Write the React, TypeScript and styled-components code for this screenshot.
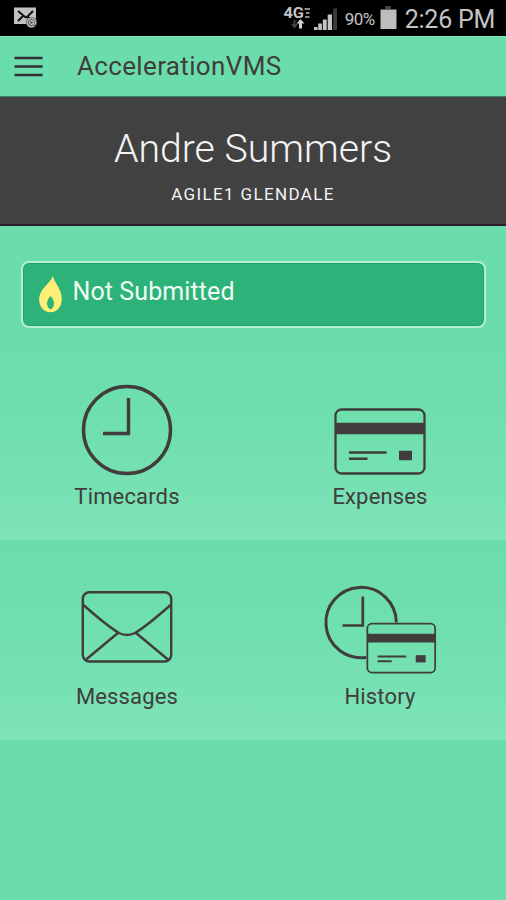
import React from 'react';
import styled, { createGlobalStyle } from 'styled-components';

const ink = '#403d3c';

const GlobalStyle = createGlobalStyle`
  * { box-sizing: border-box; }
  body { margin: 0; background: #6bdcab; font-family: Roboto, "Liberation Sans", sans-serif; }
  svg { display: block; flex: none; }
`;

const Screen = styled.div`
  width: 506px;
  height: 900px;
  display: flex;
  flex-direction: column;
  overflow: hidden;
  background: #6bdcab;
`;

const StatusBar = styled.header`
  height: 36px;
  padding: 0 11px 0 14px;
  display: flex;
  align-items: flex-start;
  background: #000;
  color: #c4c4c4;
  white-space: nowrap;
`;

const Spacer = styled.div`
  flex: 1;
`;

const BatteryLevel = styled.span`
  width: 33px;
  margin: 9px 2px 0 7px;
  font-size: 17px;
  line-height: 20px;
  letter-spacing: -0.5px;
`;

const Clock = styled.time`
  margin: 4px 0 0 8px;
  font-size: 25px;
  line-height: 31px;
  letter-spacing: -0.25px;
`;

const AppBar = styled.nav`
  height: 61px;
  padding: 0 14px;
  display: flex;
  align-items: center;
  gap: 34px;
  border-top: 1px solid #83e6bd;
  border-bottom: 1px solid #37805f;
  color: ${ink};
`;

const MenuButton = styled.button`
  width: 29px;
  height: 22px;
  padding: 0;
  border: 0;
  background: none;
`;

const Title = styled.h1`
  margin: 0 0 2px;
  font-size: 26px;
  line-height: 32px;
  font-weight: 400;
  letter-spacing: 0.35px;
`;

const Profile = styled.section`
  height: 129px;
  padding-top: 28px;
  text-align: center;
  color: #f4f4f4;
  background: repeating-linear-gradient(45deg, #414141 0 2px, #424242 2px 4px);
  border-bottom: 2px solid #2c1e2b;
`;

const Name = styled.h2`
  margin: 0;
  font-size: 39.2px;
  line-height: 48px;
  font-weight: 300;
`;

const Company = styled.p`
  margin: 10px 0 0;
  font-size: 17px;
  line-height: 22px;
  letter-spacing: 1.35px;
`;

const StatusCard = styled.section`
  height: 67px;
  margin: 35px 20px 12px 21px;
  padding: 12px 0 0 16px;
  display: flex;
  gap: 10px;
  border: 2px solid #b4f0d2;
  border-radius: 8px;
  background: #2db27a;
  box-shadow: inset 0 0 0 1px #1fa56c;
  color: #effbf4;
`;

const StatusText = styled.span`
  padding: 1px 0 0 0.5px;
  font-size: 25px;
  line-height: 32px;
  letter-spacing: 0.1px;
`;

const TileRow = styled.div`
  height: 200px;
  display: grid;
  grid-template-columns: 1fr 1fr;
  background: linear-gradient(#6bdcab, #6fdfae 40%, #7de3b8);
  color: ${ink};
`;

const Tile = styled.a`
  display: flex;
  flex-direction: column;
  align-items: center;
  padding-left: 1px;
`;

const TileIcon = styled.div<{ $lift: number }>`
  height: 142px;
  padding-bottom: ${({ $lift }) => $lift}px;
  display: flex;
  align-items: flex-end;
`;

const TileLabel = styled.span`
  font-size: 22px;
  line-height: 29px;
  letter-spacing: 0.15px;
`;

const MailNotice = () => (
  <svg width="24" height="30" viewBox="14 0 24 30">
    <path d="M14 7.5H36V24H14Z" fill="#c1c1c1" />
    <path d="M18 11l7 6q1 .7 2 0l6-6M18 21l5-5M27 16l3 3" fill="none" stroke="#111" strokeWidth="2" />
    <circle cx="31.5" cy="22.5" r="5.6" fill="#555" />
    <path d="M34 25.800a4.200 4.200 0 1 1 1.600-3.300c0 2.200-2.200 2.400-2.200.6v-2.600m0 2a1.900 1.900 0 1 1-3.800 0a1.900 1.900 0 0 1 3.800 0" fill="none" stroke="#c6c6c6" strokeWidth="1.100" />
  </svg>
);

const Network = () => (
  <svg width="56" height="32" viewBox="282 0 56 32">
    <text x="283.500" y="18" fontSize="15" fontWeight="700" fill="#c4c4c4" fontFamily="Roboto" textLength="20.500" lengthAdjust="spacingAndGlyphs">4G</text>
    <path d="M304.500 9h5.500M306 13h3.500M305 17h4.500" stroke="#8b8b8b" strokeWidth="1.800" />
    <path d="M294.500 20v7m-2.500-3l2.500 3 2.500-3" stroke="#444" strokeWidth="1.800" fill="none" />
    <path d="M299 28.500v-5h-2.500l4-4.500 4 4.500H302v5Z" fill="#d0d0d0" />
    <path d="M314 27h3.500v3h-3.500zM318.200 23.500h3.700v6.500h-3.700zM322.800 19.500h3.900v10.500h-3.900zM327.700 14.500h4.300v15.500h-4.300z" fill="#c4c4c4" />
    <path d="M333.200 8.500h3.800v21.500h-3.800z" fill="#3b3b3b" />
  </svg>
);

const Battery = () => (
  <svg width="17" height="30" viewBox="0 0 17 30">
    <path d="M5 6h6v3H5z" fill="#444" />
    <path d="M.5 9.500h16V29H.5z" fill="#bdbdbd" />
  </svg>
);

const MenuIcon = () => (
  <svg width="29" height="22" viewBox="0 0 29 22">
    <path d="M.5 2h28M.5 10.500h28M.5 19h28" stroke="#352d35" strokeWidth="2.400" />
  </svg>
);

const Flame = () => (
  <svg width="23" height="38" viewBox="0 0 23 38">
    <path fillRule="evenodd" fill="#fdee76" d="M14 .5C14.500 7 22.800 13.500 22.800 24C22.800 32 18 37.200 11.500 37.200S.2 32 .2 25C.2 13 12 8.500 14 .5ZM11.500 21C9.300 23.600 8 25.700 8 28.200Q8.200 33 11.500 34.200Q14.900 33 15 28.200C15 25.700 13.700 23.600 11.500 21Z" />
  </svg>
);

const ClockIcon = () => (
  <svg width="92" height="92" viewBox="0 0 92 92" fill="none" stroke={ink}>
    <circle cx="46" cy="46" r="43.500" strokeWidth="3.400" />
    <path d="M47.500 14V49.500H22" strokeWidth="3.400" />
  </svg>
);

const CardShape = () => (
  <>
    <rect x="1.500" y="1.500" width="89" height="64" rx="6" strokeWidth="2.300" />
    <path d="M1 20.500H91" strokeWidth="11.500" />
    <path d="M15 44.500H52.500M15 50.800H33.500" strokeWidth="2.600" />
    <path d="M65 47.500H78" strokeWidth="9.500" />
  </>
);

const CardIcon = () => (
  <svg width="92" height="67" viewBox="0 0 92 67" fill="none" stroke={ink}>
    <CardShape />
  </svg>
);

const Envelope = () => (
  <svg width="92" height="72" viewBox="0 0 92 72" fill="none" stroke={ink} strokeWidth="2.400">
    <rect x="1.800" y="1.300" width="88.400" height="69.200" rx="6.500" />
    <path d="M2.500 14C16 26 28 36 38 42Q46 46 54 42C64 36 76 26 89.500 14M37.500 41.500L4.500 69M54.500 41.500L87.500 69" />
  </svg>
);

const HistoryIcon = () => (
  <svg width="114" height="90" viewBox="0 0 114 90" fill="none" stroke={ink}>
    <path d="M43.200 73.400A35.200 35.200 0 1 1 73.300 38.500" strokeWidth="3" />
    <path d="M39.800 12.500V41.500H19.500" strokeWidth="2.700" />
    <g transform="translate(43.200 38.600) scale(.762)">
      <CardShape />
    </g>
  </svg>
);

const rows = [
  [
    { label: 'Timecards', lift: 6, icon: <ClockIcon /> },
    { label: 'Expenses', lift: 7, icon: <CardIcon /> },
  ],
  [
    { label: 'Messages', lift: 19, icon: <Envelope /> },
    { label: 'History', lift: 8, icon: <HistoryIcon /> },
  ],
];

export default function App() {
  return (
    <Screen>
      <GlobalStyle />
      <StatusBar>
        <MailNotice />
        <Spacer />
        <Network />
        <BatteryLevel>90%</BatteryLevel>
        <Battery />
        <Clock>2:26 PM</Clock>
      </StatusBar>
      <AppBar>
        <MenuButton aria-label="Menu"><MenuIcon /></MenuButton>
        <Title>AccelerationVMS</Title>
      </AppBar>
      <Profile>
        <Name>Andre Summers</Name>
        <Company>AGILE1 GLENDALE</Company>
      </Profile>
      <StatusCard>
        <Flame />
        <StatusText>Not Submitted</StatusText>
      </StatusCard>
      {rows.map((tiles, index) => (
        <TileRow key={index}>
          {tiles.map(({ label, lift, icon }) => (
            <Tile key={label}>
              <TileIcon $lift={lift}>{icon}</TileIcon>
              <TileLabel>{label}</TileLabel>
            </Tile>
          ))}
        </TileRow>
      ))}
    </Screen>
  );
}
